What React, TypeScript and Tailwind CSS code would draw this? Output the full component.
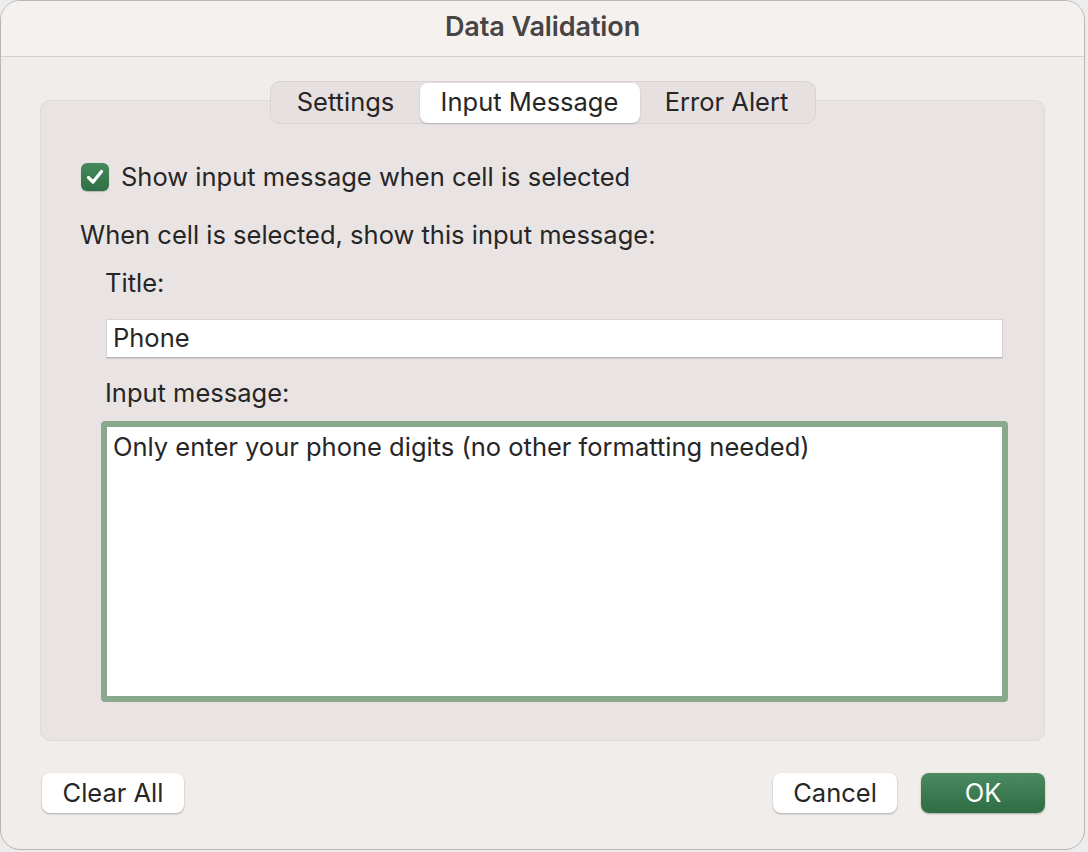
export default function App() {
  return (
    <div
      className="w-[1088px] h-[852px] bg-[#ececec] overflow-hidden"
      style={{ fontFamily: "Inter, 'Noto Sans', sans-serif" }}
    >
      <div className="w-[1085px] h-[850px] bg-[#f1edeb] rounded-[20px] border border-[#b9b6b5] overflow-hidden flex flex-col text-[#262626]">
        {/* title bar */}
        <div className="h-[56px] shrink-0 bg-[#f5f1ef] border-b border-[#d6d1cf] flex items-center justify-center pb-[2px]">
          <span className="text-[27px] font-semibold text-[#484444] tracking-[-0.1px]">Data Validation</span>
        </div>

        <div className="px-[39px] pt-[43px]">
          <div className="relative bg-[#e9e4e3] border border-[#dfdad9] rounded-[10px] h-[641px] px-[40px] pt-[62px]">
            {/* tabs */}
            <div className="absolute -top-[20px] left-1/2 -translate-x-1/2 h-[43px] flex items-center bg-[#e6e1e0] border border-[#d9d4d3] rounded-[10px] px-[1px]">
              <div className="w-[148px] h-[40px] flex items-center justify-center text-[25.5px] text-[#262626]">Settings</div>
              <div className="w-[220px] h-[40px] flex items-center justify-center text-[25.5px] text-[#262626] bg-white rounded-[8px] shadow-[0_1px_2px_rgba(0,0,0,0.18)]">Input Message</div>
              <div className="w-[174px] h-[40px] flex items-center justify-center text-[25.5px] text-[#262626]">Error Alert</div>
            </div>

            <div className="flex items-center h-[28px]">
              <div className="w-[28px] h-[28px] rounded-[6px] bg-gradient-to-b from-[#468a5c] to-[#2f6f45] flex items-center justify-center shadow-[0_1px_1px_rgba(0,0,0,0.2)]">
                <svg width="20" height="20" viewBox="0 0 20 20" fill="none">
                  <path d="M3.5 10.5 L8 15 L16.5 4.5" stroke="white" strokeWidth="3.2" strokeLinecap="round" strokeLinejoin="round" />
                </svg>
              </div>
              <span className="ml-[12px] text-[25.5px] leading-[30px]">Show input message when cell is selected</span>
            </div>

            <div className="mt-[29px] text-[25.5px] leading-[30px] -ml-[1px]">When cell is selected, show this input message:</div>

            <div className="pl-[24px]">
              <div className="mt-[18px] text-[25.5px] leading-[30px]">Title:</div>
              <div className="mt-[21px] ml-[1px] w-[897px] h-[39px] bg-white border border-[#d8d4d3] border-b-[#b6b2b1] shadow-[0_1px_1px_rgba(0,0,0,0.08)] flex items-center px-[6px] text-[25.5px]">
                Phone
              </div>
              <div className="mt-[20px] text-[25.5px] leading-[30px]">Input message:</div>
            </div>

            <div className="mt-[13px] ml-[20px] w-[907px] h-[281px] bg-white border-[6px] border-[#8aa88c] rounded-[4px] px-[6px] pt-[5px] text-[25.5px] leading-[30px]">
              Only enter your phone digits (no other formatting needed)
            </div>
          </div>

          <div className="flex items-center mt-[32px] h-[40px]">
            <div className="ml-[2px] w-[142px] h-[40px] bg-white rounded-[8px] shadow-[0_1px_2px_rgba(0,0,0,0.3)] flex items-center justify-center text-[25.5px]">Clear All</div>
            <div className="ml-auto w-[124px] h-[40px] bg-white rounded-[8px] shadow-[0_1px_2px_rgba(0,0,0,0.3)] flex items-center justify-center text-[25.5px]">Cancel</div>
            <div className="ml-[24px] w-[124px] h-[40px] rounded-[8px] bg-gradient-to-b from-[#4b8b61] to-[#2e6d44] shadow-[0_1px_2px_rgba(0,0,0,0.3)] flex items-center justify-center text-[25.5px] text-white">OK</div>
          </div>
        </div>
      </div>
    </div>
  );
}
